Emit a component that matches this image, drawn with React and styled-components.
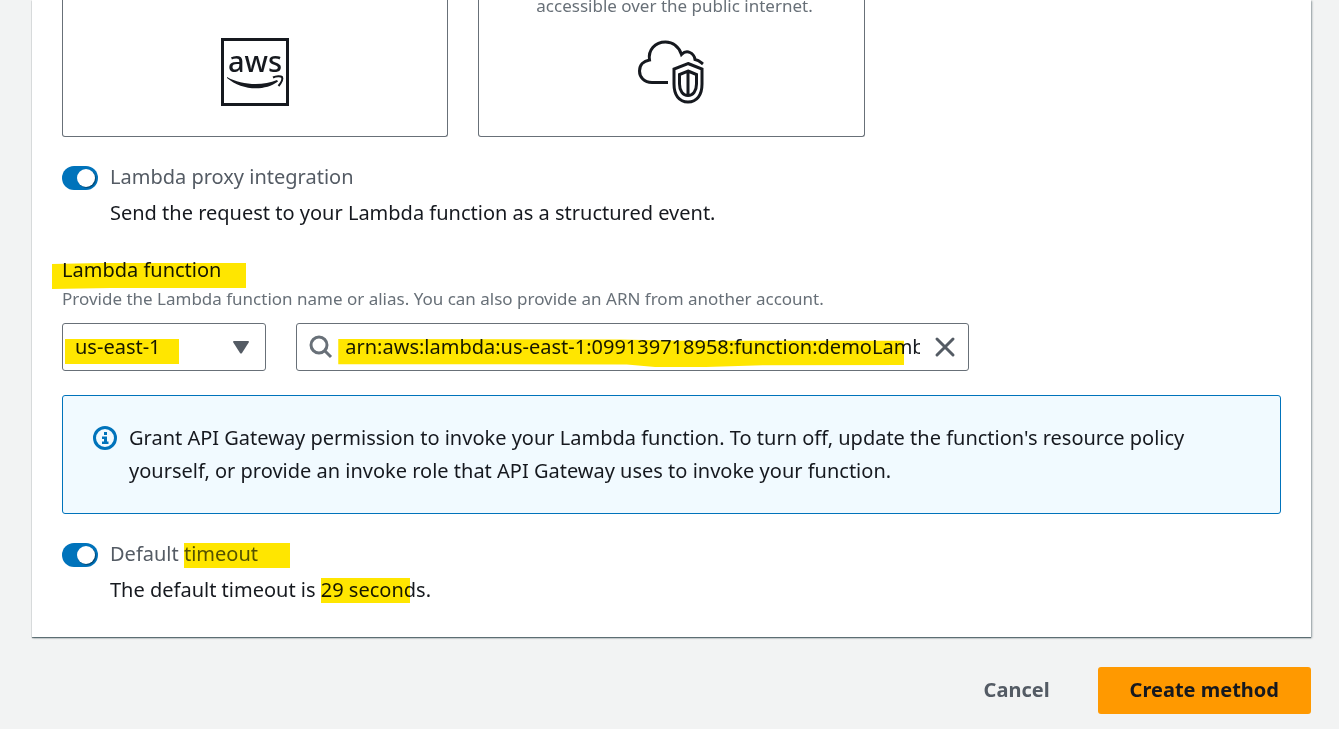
import React, { useState } from "react";
import styled, { createGlobalStyle } from "styled-components";

const GlobalStyle = createGlobalStyle`
  * { box-sizing: border-box; }
  body {
    margin: 0;
    background: #f2f3f3;
    color: #16191f;
    font-family: "Noto Sans", "Open Sans", sans-serif;
    font-size: 20px;
    line-height: 33px;
  }
  button, input, select { font: inherit; color: inherit; }
`;

const Page = styled.main`
  padding: 0 28px 15px 32px;
`;

const Panel = styled.section`
  padding: 0 30px 31px;
  background: #fff;
  box-shadow: 0 1px 1px 0 rgba(0, 28, 36, 0.5), 1px 1px 2px 0 rgba(0, 28, 36, 0.35);
`;

const Cards = styled.div`
  display: grid;
  grid-template-columns: repeat(3, 1fr);
  gap: 30px;
`;

const Card = styled.div`
  display: flex;
  flex-direction: column;
  align-items: center;
  justify-content: flex-end;
  min-height: 137px;
  padding-bottom: 30px;
  border: 1px solid #687078;
  border-top: 0;
  border-radius: 0 0 3px 3px;
`;

const CardText = styled.p`
  align-self: stretch;
  margin: -8px 0 18px;
  padding-left: 57px;
  color: #687078;
  font-size: 17px;
  line-height: 28px;
`;

const CardIcon = styled.svg`
  display: block;
  width: 68px;
  height: 68px;
`;

const ToggleField = styled.div`
  display: grid;
  grid-template-columns: 36px 1fr;
  column-gap: 12px;
  row-gap: 3px;
  margin-top: 23px;
`;

const Switch = styled.input`
  appearance: none;
  width: 36px;
  height: 24px;
  margin: 6px 0 0;
  padding: 3px;
  border-radius: 12px;
  background: ${(p) => (p.checked ? "#0073bb" : "#687078")};

  &::before {
    content: "";
    display: block;
    width: 18px;
    height: 18px;
    margin-left: ${(p) => (p.checked ? "12px" : "0")};
    border-radius: 50%;
    background: #fff;
    box-shadow: 1px 1px 1px rgba(0, 0, 0, 0.4);
  }
`;

const ToggleLabel = styled.label`
  color: #545b64;
`;

const ToggleText = styled.p`
  grid-column: 2;
  margin: 0;
`;

const Marked = styled.span`
  position: relative;

  &::after {
    content: "";
    position: absolute;
    inset: ${(p) => p.$inset};
    clip-path: ${(p) => p.$shape || "none"};
    background: #ffe600;
    mix-blend-mode: multiply;
    pointer-events: none;
  }
`;

const Field = styled.div`
  margin-top: 24px;
`;

const FieldLabel = styled.label`
  display: block;
`;

const Hint = styled.p`
  margin: 1px 0 12px;
  color: #687078;
  font-size: 17px;
  line-height: 24px;
`;

const Controls = styled.div`
  display: grid;
  grid-template-columns: repeat(12, 1fr);
  column-gap: 30px;
  max-width: 907px;
`;

const Control = styled(Marked)`
  grid-column: span ${(p) => p.$span};
  display: flex;
  align-items: center;
  height: 48px;
  min-width: 0;
  border: 1px solid #687078;
  border-radius: 3px;
  background: #fff;
`;

const RegionSelect = styled.select`
  appearance: none;
  flex: 1;
  min-width: 0;
  height: 100%;
  padding: 0 12px 2px;
  border: 0;
  background: none;
`;

const Arrow = styled.svg`
  flex: none;
  width: 16px;
  height: 13px;
  margin-right: 16px;
  fill: #545b64;
  pointer-events: none;
`;

const SearchIcon = styled.svg`
  flex: none;
  width: 24px;
  height: 24px;
  margin: 0 12px;
  fill: none;
  stroke: #687078;
  stroke-width: 3;
`;

const SearchInput = styled.input`
  flex: 1;
  min-width: 0;
  height: 100%;
  padding: 0 0 2px;
  border: 0;
  background: none;
  outline: 0;
`;

const ClearButton = styled.button`
  display: flex;
  margin: 0 11px 0 13px;
  padding: 0;
  border: 0;
  background: none;

  svg {
    width: 24px;
    height: 24px;
    stroke: #545b64;
    stroke-width: 3;
    stroke-linecap: round;
  }
`;

const Alert = styled.div`
  display: flex;
  gap: 12px;
  margin-top: 24px;
  padding: 25px 30px 26px;
  border: 1px solid #0073bb;
  border-radius: 3px;
  background: #f1faff;

  svg {
    flex: none;
    width: 24px;
    height: 24px;
    margin-top: 5px;
  }

  p {
    max-width: 1090px;
    margin: 0;
  }
`;

const Actions = styled.div`
  display: flex;
  justify-content: flex-end;
  gap: 16px;
  margin-top: 30px;
`;

const Button = styled.button`
  height: 47px;
  padding: 0 32px 2px;
  border: 0;
  border-radius: 3px;
  background: ${(p) => (p.$primary ? "#ff9900" : "transparent")};
  color: ${(p) => (p.$primary ? "#16191f" : "#545b64")};
  font-weight: 700;
`;

function AwsIcon() {
  return (
    <CardIcon viewBox="0 0 68 68" role="img" aria-label="AWS">
      <rect x="1.5" y="1.5" width="65" height="65" fill="none" stroke="#16191f" strokeWidth="3" />
      <text x="34" y="34" textAnchor="middle" fontFamily="Noto Sans" fontSize="29" fontWeight="500" fill="#16191f">
        aws
      </text>
      <path d="M6 39 C20 47 41 48.500 56 42 L57 43.500 C43 54 20 52 6 40 Z" fill="#16191f" />
      <path d="M52 39.500 C55 38 60 38 61 39 C62 41 60 45 57.500 48" fill="none" stroke="#16191f" strokeWidth="2" />
    </CardIcon>
  );
}

function CloudShieldIcon() {
  return (
    <CardIcon viewBox="0 0 68 68" fill="none" stroke="#16191f" strokeWidth="3" aria-hidden="true">
      <path d="M31 44.500 H15 C7 44.500 2.500 39 2.500 33 C2.500 27 6.500 23 12.500 22 C11 12 18 4 28.500 4 C36 4 42 9 44.500 16.500 C50 11 57 15 58 21.500 C62 22 63 23.500 66 26" />
      <path d="M51 25.500 L65 31 V46 C65 57 60 64 51 64 C42 64 37 57 37 46 V31 Z" />
      <path d="M51 33 L59.500 36.500 V46 C59.500 53 56 57.500 51 57.500 C46 57.500 42.500 53 42.500 46 V36.500 Z M51 33 V57" />
    </CardIcon>
  );
}

export default function App() {
  const [proxy, setProxy] = useState(true);
  const [timeout, setTimeoutOn] = useState(true);
  const [arn, setArn] = useState("arn:aws:lambda:us-east-1:099139718958:function:demoLambda");

  return (
    <>
      <GlobalStyle />
      <Page>
        <Panel>
          <Cards>
            <Card>
              <AwsIcon />
            </Card>
            <Card>
              <CardText>accessible over the public internet.</CardText>
              <CloudShieldIcon />
            </Card>
          </Cards>

          <ToggleField>
            <Switch id="proxy" type="checkbox" role="switch" checked={proxy} onChange={(e) => setProxy(e.target.checked)} />
            <ToggleLabel htmlFor="proxy">Lambda proxy integration</ToggleLabel>
            <ToggleText>Send the request to your Lambda function as a structured event.</ToggleText>
          </ToggleField>

          <Field>
            <FieldLabel htmlFor="fn">
              <Marked
                $inset="7px -25px -6px -10px"
                $shape="polygon(0 4%, 25% 0, 100% 0, 100% 96%, 30% 96%, 0 100%)"
              >
                Lambda function
              </Marked>
            </FieldLabel>
            <Hint>Provide the Lambda function name or alias. You can also provide an ARN from another account.</Hint>
            <Controls>
              <Control $span={3} $inset="15px 86px 6px 2px">
                <RegionSelect aria-label="Region" defaultValue="us-east-1">
                  <option>us-east-1</option>
                </RegionSelect>
                <Arrow viewBox="0 0 16 13" aria-hidden="true">
                  <path d="M1 0 H15 Q16 0 16 1 L9 12 Q8 13 7 12 L0 1 Q0 0 1 0 Z" />
                </Arrow>
              </Control>
              <Control
                $span={9}
                $inset="15px 64px 3px 41px"
                $shape="polygon(0 0, 50% 2%, 60% 6%, 100% 6%, 100% 93%, 75% 94%, 65% 100%, 56% 100%, 51% 91%, 0 90%)"
              >
                <SearchIcon viewBox="0 0 24 24" aria-hidden="true">
                  <circle cx="10" cy="10" r="8" />
                  <path d="M16 16 L22 22" />
                </SearchIcon>
                <SearchInput id="fn" value={arn} onChange={(e) => setArn(e.target.value)} />
                <ClearButton type="button" aria-label="Clear" onClick={() => setArn("")}>
                  <svg viewBox="0 0 24 24">
                    <path d="M4 4 L20 20 M20 4 L4 20" />
                  </svg>
                </ClearButton>
              </Control>
            </Controls>
          </Field>

          <Alert>
            <svg viewBox="0 0 24 24" fill="none" aria-hidden="true">
              <circle cx="12" cy="12" r="10.500" stroke="#0073bb" strokeWidth="3" />
              <path d="M11 6 H14 V9 H11 Z M9 10.500 H14 V15.500 H15.500 V18 H9 V15.500 H11 V13 H9 Z" fill="#0073bb" />
            </svg>
            <p>
              Grant API Gateway permission to invoke your Lambda function. To turn off, update the function's resource
              policy yourself, or provide an invoke role that API Gateway uses to invoke your function.
            </p>
          </Alert>

          <ToggleField>
            <Switch id="timeout" type="checkbox" role="switch" checked={timeout} onChange={(e) => setTimeoutOn(e.target.checked)} />
            <ToggleLabel htmlFor="timeout">
              Default <Marked $inset="3px -32px -1px 0">timeout</Marked>
            </ToggleLabel>
            <ToggleText>
              The default timeout is <Marked $inset="2px -6px 0 0">29 secon</Marked>ds.
            </ToggleText>
          </ToggleField>
        </Panel>

        <Actions>
          <Button type="button">Cancel</Button>
          <Button type="button" $primary>
            Create method
          </Button>
        </Actions>
      </Page>
    </>
  );
}
